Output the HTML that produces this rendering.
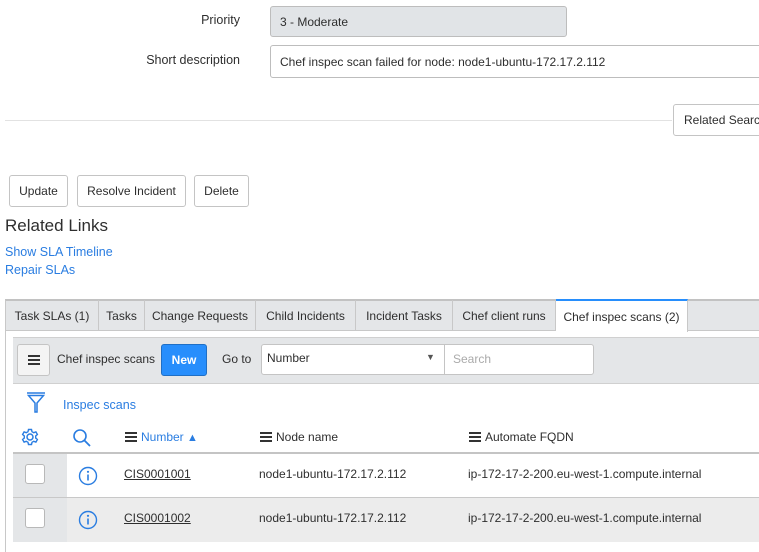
<!DOCTYPE html>
<html><head><meta charset="utf-8"><style>
*{box-sizing:border-box;margin:0;padding:0}
body{width:759px;height:552px;overflow:hidden;background:#fff;font-family:"Liberation Sans",sans-serif;font-size:12px;color:#2e2e2e;position:relative}
.a{position:absolute;white-space:nowrap}
.btn{position:absolute;border:1px solid #c4c4c4;border-radius:3px;background:#fff;display:flex;align-items:center;justify-content:center;font-size:12px}
.tab{position:absolute;top:300px;height:31px;border-right:1px solid #c8c8c8;display:flex;align-items:center;justify-content:center;font-size:12px}
.link{color:#2a7de1}
.hb{display:inline-block;vertical-align:-1px;margin-right:4px}
</style></head><body>
<div class="a" style="right:519px;top:13px;font-size:12.5px">Priority</div>
<div class="a" style="left:270px;top:6px;width:297px;height:31px;background:#e1e4e7;border:1px solid #bdbdbd;border-radius:3px;padding:8px 9px">3 - Moderate</div>
<div class="a" style="right:519px;top:53px;font-size:12.5px">Short description</div>
<div class="a" style="left:270px;top:45px;width:500px;height:33px;background:#fff;border:1px solid #bdbdbd;border-radius:3px;padding:9px 9px">Chef inspec scan failed for node: node1-ubuntu-172.17.2.112</div>
<div class="a" style="left:5px;top:120px;width:667px;height:1px;background:#e2e2e2"></div>
<div class="btn" style="left:673px;top:104px;width:100px;height:32px;justify-content:flex-start;padding-left:10px">Related Search</div>
<div class="btn" style="left:9px;top:175px;width:59px;height:32px">Update</div>
<div class="btn" style="left:77px;top:175px;width:109px;height:32px">Resolve Incident</div>
<div class="btn" style="left:194px;top:175px;width:55px;height:32px">Delete</div>
<div class="a" style="left:5px;top:216px;font-size:17px">Related Links</div>
<div class="a link" style="left:5px;top:245px;font-size:12.5px">Show SLA Timeline</div>
<div class="a link" style="left:5px;top:263px;font-size:12.5px">Repair SLAs</div>

<div class="a" style="left:5px;top:299px;width:760px;height:32px;background:#e4e6e8;border-top:2px solid #c2c2c2;border-left:1px solid #c8c8c8;border-bottom:1px solid #c8c8c8"></div>
<div class="tab" style="left:6px;width:93px">Task SLAs (1)</div>
<div class="tab" style="left:99px;width:46px">Tasks</div>
<div class="tab" style="left:145px;width:111px">Change Requests</div>
<div class="tab" style="left:256px;width:100px">Child Incidents</div>
<div class="tab" style="left:356px;width:97px">Incident Tasks</div>
<div class="tab" style="left:453px;width:103px">Chef client runs</div>
<div class="tab" style="left:556px;top:299px;height:33px;width:132px;background:#fff;border-top:2px solid #278efc;border-right:1px solid #c8c8c8">Chef inspec scans (2)</div>
<div class="a" style="left:5px;top:331px;width:1px;height:221px;background:#c8c8c8"></div>

<div class="a" style="left:13px;top:337px;width:750px;height:47px;background:#e4e6e8;border-top:1px solid #d0d0d0;border-bottom:1px solid #d0d0d0"></div>
<div class="btn" style="left:17px;top:344px;width:33px;height:32px;background:#f4f4f4"><svg width="12" height="10"><rect y="0" width="12" height="2" fill="#333"/><rect y="4" width="12" height="2" fill="#333"/><rect y="8" width="12" height="2" fill="#333"/></svg></div>
<div class="a" style="left:57px;top:352px">Chef inspec scans</div>
<div class="a" style="left:161px;top:344px;width:46px;height:32px;background:#278efc;border:1px solid #1f6fc5;border-radius:3px;color:#fff;font-weight:bold;display:flex;align-items:center;justify-content:center">New</div>
<div class="a" style="left:222px;top:352px">Go to</div>
<div class="a" style="left:261px;top:344px;width:333px;height:31px;background:#fff;border:1px solid #c4c4c4;border-radius:3px"></div>
<div class="a" style="left:444px;top:344px;width:1px;height:31px;background:#c4c4c4"></div>
<div class="a" style="left:267px;top:351px">Number</div>
<div class="a" style="left:426px;top:352px;font-size:9px;color:#555">▼</div>
<div class="a" style="left:453px;top:352px;color:#aaa">Search</div>

<svg class="a" style="left:26px;top:392px" width="20" height="22" viewBox="0 0 20 22"><path d="M1 1h18M2.5 3.5h15L11 11v9h-2v-9z" fill="none" stroke="#2a7de1" stroke-width="1.5"/></svg>
<div class="a link" style="left:63px;top:398px;font-size:12.5px">Inspec scans</div>

<svg class="a" style="left:21px;top:428px" width="18" height="18" viewBox="0 0 18 18"><circle cx="9" cy="9" r="3" fill="none" stroke="#2a7de1" stroke-width="1.5"/><path d="M7.5 1.5h3l.5 2.2 1.8 1 2.1-.8 1.5 2.6-1.7 1.5v2l1.7 1.5-1.5 2.6-2.1-.8-1.8 1-.5 2.2h-3l-.5-2.2-1.8-1-2.1.8-1.5-2.6L3.3 10V8L1.6 6.5l1.5-2.6 2.1.8 1.8-1z" fill="none" stroke="#2a7de1" stroke-width="1.4"/></svg>
<svg class="a" style="left:72px;top:428px" width="20" height="20" viewBox="0 0 20 20"><circle cx="8" cy="8" r="6" fill="none" stroke="#2a7de1" stroke-width="1.6"/><path d="M12.5 12.5l5.5 5.5" stroke="#2a7de1" stroke-width="1.8"/></svg>
<div class="a" style="left:125px;top:430px"><svg class="hb" width="12" height="10"><rect y="0" width="12" height="2" fill="#333"/><rect y="4" width="12" height="2" fill="#333"/><rect y="8" width="12" height="2" fill="#333"/></svg><span class="link">Number</span> <span class="link" style="font-size:11px">▲</span></div>
<div class="a" style="left:260px;top:430px"><svg class="hb" width="12" height="10"><rect y="0" width="12" height="2" fill="#333"/><rect y="4" width="12" height="2" fill="#333"/><rect y="8" width="12" height="2" fill="#333"/></svg>Node name</div>
<div class="a" style="left:469px;top:430px"><svg class="hb" width="12" height="10"><rect y="0" width="12" height="2" fill="#333"/><rect y="4" width="12" height="2" fill="#333"/><rect y="8" width="12" height="2" fill="#333"/></svg>Automate FQDN</div>

<div class="a" style="left:13px;top:452px;width:750px;height:2px;background:#c4c4c4"></div>
<div class="a" style="left:13px;top:454px;width:54px;height:43px;background:#e4e6e8"></div>
<div class="a" style="left:13px;top:497px;width:750px;height:1px;background:#c8c8c8"></div>
<div class="a" style="left:13px;top:498px;width:750px;height:44px;background:#ececec"></div>
<div class="a" style="left:13px;top:498px;width:54px;height:44px;background:#e4e6e8"></div>

<div class="a" style="left:25px;top:464px;width:20px;height:20px;background:#fff;border:1px solid #b8b8b8;border-radius:3px"></div>
<div class="a" style="left:25px;top:508px;width:20px;height:20px;background:#fff;border:1px solid #b8b8b8;border-radius:3px"></div>
<svg class="a" style="left:78px;top:466px" width="20" height="20" viewBox="0 0 20 20"><circle cx="10" cy="10" r="8.5" fill="none" stroke="#2a7de1" stroke-width="1.4"/><circle cx="10" cy="5.8" r="1.1" fill="#2a7de1"/><path d="M10 8.5v6" stroke="#2a7de1" stroke-width="1.6"/></svg>
<svg class="a" style="left:78px;top:510px" width="20" height="20" viewBox="0 0 20 20"><circle cx="10" cy="10" r="8.5" fill="none" stroke="#2a7de1" stroke-width="1.4"/><circle cx="10" cy="5.8" r="1.1" fill="#2a7de1"/><path d="M10 8.5v6" stroke="#2a7de1" stroke-width="1.6"/></svg>
<div class="a" style="left:124px;top:467px;text-decoration:underline">CIS0001001</div>
<div class="a" style="left:259px;top:467px">node1-ubuntu-172.17.2.112</div>
<div class="a" style="left:468px;top:467px">ip-172-17-2-200.eu-west-1.compute.internal</div>
<div class="a" style="left:124px;top:511px;text-decoration:underline">CIS0001002</div>
<div class="a" style="left:259px;top:511px">node1-ubuntu-172.17.2.112</div>
<div class="a" style="left:468px;top:511px">ip-172-17-2-200.eu-west-1.compute.internal</div>
</body></html>
